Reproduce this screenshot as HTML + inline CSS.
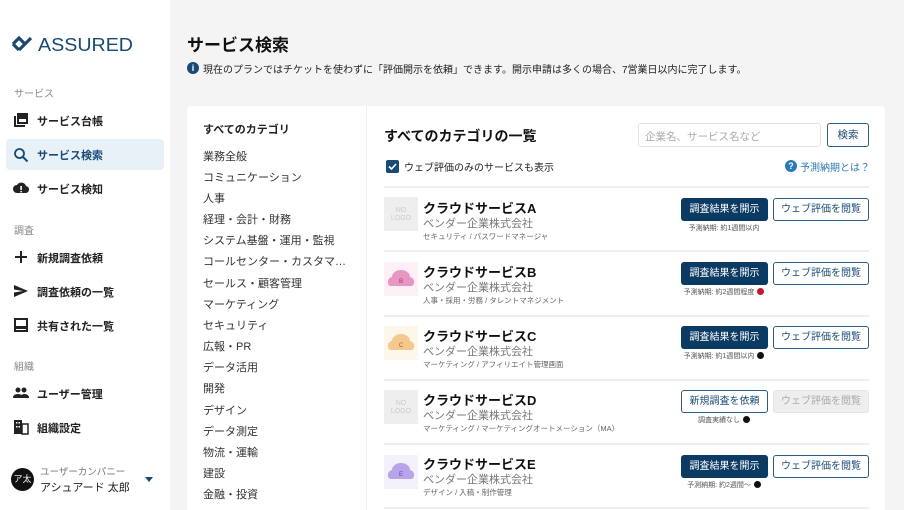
<!DOCTYPE html>
<html><head><meta charset="utf-8"><style>
*{margin:0;padding:0;box-sizing:border-box}
html{width:904px;height:510px;overflow:hidden}
body{width:904px;height:510px;overflow:hidden;background:#f4f4f4;font-family:"Liberation Sans","Noto Sans CJK JP",sans-serif;color:#222;position:relative}
.a{position:absolute;white-space:nowrap}
#side{position:absolute;left:0;top:0;width:170px;height:510px;background:#fff}
.lbl{font-size:10px;color:#888}
.it{font-size:11px;font-weight:bold;color:#222}
.ic{position:absolute;left:13px;width:16px;height:16px}
.card{position:absolute;left:187px;top:106px;width:698px;height:404px;background:#fff;border-radius:4px 4px 0 0}
.cat{font-size:11px;color:#333;left:203px}
.sep{position:absolute;left:384px;width:485px;height:2px;background:#eee}
.logo{position:absolute;left:384px;width:34px;height:34px;background:#eee;font-size:7px;color:#ccc;text-align:center;line-height:8px;padding-top:10px}
.t{font-size:13px;font-weight:bold;color:#111;left:423px}
.v{font-size:11px;color:#777;left:423px}
.g{font-size:7.5px;color:#666;left:423px}
.b1{position:absolute;left:681px;width:87px;height:23px;background:#0b3a63;color:#fff;font-size:10px;text-align:center;line-height:23px;border-radius:3px}
.b2{position:absolute;left:773px;width:96px;height:23px;border:1px solid #2b5b85;color:#1f4c78;font-size:10px;text-align:center;line-height:21px;border-radius:3px;background:#fff}
.n{font-size:7px;color:#555;text-align:center;width:120px;left:664px}
.dot{display:inline-block;width:7px;height:7px;border-radius:50%;background:#111;vertical-align:-1px;margin-left:3px}
</style></head><body>
<div id="side">
<svg class="a" style="left:11px;top:34px" width="124" height="20" viewBox="0 0 124 20">
<path d="M2 10 L8 4 L14 10" stroke="#184a73" stroke-width="3.2" fill="none"/><path d="M8 16 L14 10 L20 4" stroke="#184a73" stroke-width="3.2" fill="none"/><path d="M2 10 L8 16" stroke="#184a73" stroke-width="3.2" fill="none"/>
<text x="27" y="17" font-family="Liberation Sans" font-size="18" fill="#184a73" textLength="95" lengthAdjust="spacingAndGlyphs">ASSURED</text></svg>
<div class="a lbl" style="left:14px;top:85px">サービス</div>
<div class="a" style="left:6px;top:139px;width:158px;height:31px;background:#e8f0f8;border-radius:4px"></div>
<svg class="ic" style="top:112px" viewBox="0 0 16 16"><rect x="4" y="1" width="11" height="11" fill="#222"/><rect x="1" y="4" width="2" height="11" fill="#222"/><rect x="1" y="13" width="11" height="2" fill="#222"/><rect x="6" y="7" width="7" height="3" fill="#fff"/></svg>
<div class="a it" style="left:37px;top:113px">サービス台帳</div>
<svg class="ic" style="top:147px" viewBox="0 0 16 16"><circle cx="6.5" cy="6.5" r="4.5" stroke="#184a73" stroke-width="1.8" fill="none"/><path d="M10 10 L14.5 14.5" stroke="#184a73" stroke-width="2"/></svg>
<div class="a it" style="left:37px;top:147px;color:#184a73">サービス検索</div>
<svg class="ic" style="top:180px" viewBox="0 0 16 16"><path d="M4 13 A4 4 0 0 1 4 5 A5 5 0 0 1 13 6 A3.5 3.5 0 0 1 12 13 Z" fill="#222"/><rect x="7.3" y="6" width="1.6" height="4" fill="#fff"/><rect x="7.3" y="11" width="1.6" height="1.4" fill="#fff"/></svg>
<div class="a it" style="left:37px;top:181px">サービス検知</div>
<div class="a lbl" style="left:14px;top:222px">調査</div>
<svg class="ic" style="top:249px" viewBox="0 0 16 16"><path d="M8 2V14M2 8H14" stroke="#222" stroke-width="2"/></svg>
<div class="a it" style="left:37px;top:250px">新規調査依頼</div>
<svg class="ic" style="top:283px" viewBox="0 0 16 16"><path d="M1 2 L15 8 L1 14 L1 9.5 L10 8 L1 6.5Z" fill="#222"/></svg>
<div class="a it" style="left:37px;top:284px">調査依頼の一覧</div>
<svg class="ic" style="top:317px" viewBox="0 0 16 16"><rect x="2" y="2" width="12" height="12" stroke="#222" stroke-width="2" fill="none"/><rect x="2" y="9" width="12" height="3" fill="#222"/></svg>
<div class="a it" style="left:37px;top:318px">共有された一覧</div>
<div class="a lbl" style="left:14px;top:358px">組織</div>
<svg class="ic" style="top:385px" viewBox="0 0 16 16"><circle cx="5" cy="5" r="2.5" fill="#222"/><circle cx="11" cy="5" r="2.5" fill="#222"/><path d="M0 13 Q0 9 5 9 Q10 9 10 13Z M8 13 Q8 9 11 9 Q16 9 16 13Z" fill="#222"/></svg>
<div class="a it" style="left:37px;top:386px">ユーザー管理</div>
<svg class="ic" style="top:419px" viewBox="0 0 16 16"><rect x="1" y="1" width="8" height="14" fill="#222"/><rect x="9" y="5" width="6" height="10" stroke="#222" stroke-width="1.5" fill="none"/><rect x="3" y="3" width="1.5" height="1.5" fill="#fff"/><rect x="5.5" y="3" width="1.5" height="1.5" fill="#fff"/><rect x="3" y="7" width="1.5" height="1.5" fill="#fff"/><rect x="5.5" y="7" width="1.5" height="1.5" fill="#fff"/></svg>
<div class="a it" style="left:37px;top:420px">組織設定</div>
<div class="a" style="left:11px;top:468px;width:23px;height:23px;border-radius:50%;background:#111;color:#fff;font-size:9px;text-align:center;line-height:23px">ア太</div>
<div class="a" style="left:40px;top:464px;font-size:9.5px;color:#777">ユーザーカンパニー</div>
<div class="a" style="left:40px;top:479px;font-size:11px;color:#222">アシュアード 太郎</div>
<div class="a" style="left:145px;top:477px;width:0;height:0;border-left:4px solid transparent;border-right:4px solid transparent;border-top:5px solid #184a73"></div>
</div>

<div class="a" style="left:187px;top:31px;font-size:17px;font-weight:bold;color:#111">サービス検索</div>
<div class="a" style="left:187px;top:62px;width:12px;height:12px;border-radius:50%;background:#184a73;color:#fff;font-size:9px;font-weight:bold;text-align:center;line-height:12px">i</div>
<div class="a" style="left:203px;top:61px;font-size:10px;color:#222">現在のプランではチケットを使わずに「評価開示を依頼」できます。開示申請は多くの場合、7営業日以内に完了します。</div>

<div class="card"></div>
<div class="a" style="left:366px;top:106px;width:1px;height:404px;background:#eee"></div>
<div class="a" style="left:203px;top:121px;font-size:11px;font-weight:bold">すべてのカテゴリ</div>
<div class="a cat" style="top:148px">業務全般</div>
<div class="a cat" style="top:169px">コミュニケーション</div>
<div class="a cat" style="top:190px">人事</div>
<div class="a cat" style="top:211px">経理・会計・財務</div>
<div class="a cat" style="top:232px">システム基盤・運用・監視</div>
<div class="a cat" style="top:253px;width:148px;overflow:hidden;text-overflow:ellipsis">コールセンター・カスタマーサポート</div>
<div class="a cat" style="top:275px">セールス・顧客管理</div>
<div class="a cat" style="top:296px">マーケティング</div>
<div class="a cat" style="top:317px">セキュリティ</div>
<div class="a cat" style="top:338px">広報・PR</div>
<div class="a cat" style="top:359px">データ活用</div>
<div class="a cat" style="top:380px">開発</div>
<div class="a cat" style="top:402px">デザイン</div>
<div class="a cat" style="top:423px">データ測定</div>
<div class="a cat" style="top:444px">物流・運輸</div>
<div class="a cat" style="top:465px">建設</div>
<div class="a cat" style="top:486px">金融・投資</div>

<div class="a" style="left:384px;top:126px;font-size:14px;font-weight:bold;color:#111">すべてのカテゴリの一覧</div>
<div class="a" style="left:638px;top:123px;width:183px;height:24px;border:1px solid #e2e2e2;border-radius:3px;font-size:10.5px;color:#aaa;padding:5px 6px">企業名、サービス名など</div>
<div class="a" style="left:827px;top:123px;width:42px;height:24px;border:1px solid #2b5b85;border-radius:3px;font-size:10.5px;color:#1f4c78;text-align:center;line-height:22px">検索</div>
<div class="a" style="left:386px;top:160px;width:13px;height:13px;background:#184a73;border-radius:2px"><svg width="13" height="13" viewBox="0 0 13 13" style="display:block"><path d="M3 6.5 L5.5 9 L10 4" stroke="#fff" stroke-width="1.6" fill="none"/></svg></div>
<div class="a" style="left:404px;top:159px;font-size:10px;color:#222">ウェブ評価のみのサービスも表示</div>
<div class="a" style="left:785px;top:160px;width:12px;height:12px;border-radius:50%;background:#2a7ab5;color:#fff;font-size:9px;font-weight:bold;text-align:center;line-height:12px">?</div>
<div class="a" style="left:800px;top:159px;font-size:10px;color:#2a7ab5">予測納期とは？</div>

<div class="sep" style="top:186px"></div>
<div class="sep" style="top:250px"></div>
<div class="sep" style="top:315px"></div>
<div class="sep" style="top:379px"></div>
<div class="sep" style="top:443px"></div>
<div class="sep" style="top:507px"></div>

<!-- A -->
<div class="logo" style="top:197px">NO<br>LOGO</div>
<div class="a t" style="top:198px">クラウドサービスA</div>
<div class="a v" style="top:215px">ベンダー企業株式会社</div>
<div class="a g" style="top:231px">セキュリティ / パスワードマネージャ</div>
<div class="b1" style="top:198px">調査結果を開示</div><div class="b2" style="top:198px">ウェブ評価を閲覧</div>
<div class="a n" style="top:223px">予測納期: 約1週間以内</div>
<!-- B -->
<div class="logo" style="top:262px;background:#fdf0f6;padding-top:0"><svg width="34" height="34" viewBox="0 0 34 34"><path d="M6 24 A5 5 0 0 1 8 15 A9 7 0 0 1 26 15 A5 5 0 0 1 28 24Z" fill="#e897c4"/><text x="17" y="21" font-size="6" fill="#a03070" text-anchor="middle">B</text></svg></div>
<div class="a t" style="top:262px">クラウドサービスB</div>
<div class="a v" style="top:279px">ベンダー企業株式会社</div>
<div class="a g" style="top:295px">人事・採用・労務 / タレントマネジメント</div>
<div class="b1" style="top:262px">調査結果を開示</div><div class="b2" style="top:262px">ウェブ評価を閲覧</div>
<div class="a n" style="top:287px">予測納期: 約2週間程度<span class="dot" style="background:#c0182e"></span></div>
<!-- C -->
<div class="logo" style="top:326px;background:#fdf6ea;padding-top:0"><svg width="34" height="34" viewBox="0 0 34 34"><path d="M6 24 A5 5 0 0 1 8 15 A9 7 0 0 1 26 15 A5 5 0 0 1 28 24Z" fill="#f3c98e"/><text x="17" y="21" font-size="6" fill="#a06020" text-anchor="middle">C</text></svg></div>
<div class="a t" style="top:326px">クラウドサービスC</div>
<div class="a v" style="top:343px">ベンダー企業株式会社</div>
<div class="a g" style="top:359px">マーケティング / アフィリエイト管理画面</div>
<div class="b1" style="top:326px">調査結果を開示</div><div class="b2" style="top:326px">ウェブ評価を閲覧</div>
<div class="a n" style="top:351px">予測納期: 約1週間以内<span class="dot"></span></div>
<!-- D -->
<div class="logo" style="top:390px">NO<br>LOGO</div>
<div class="a t" style="top:390px">クラウドサービスD</div>
<div class="a v" style="top:407px">ベンダー企業株式会社</div>
<div class="a g" style="top:423px">マーケティング / マーケティングオートメーション（MA）</div>
<div class="b2" style="top:390px;left:681px;width:87px">新規調査を依頼</div><div class="b2" style="top:390px;background:#eee;border-color:#e6e6e6;color:#aaa">ウェブ評価を閲覧</div>
<div class="a n" style="top:415px">調査実績なし<span class="dot"></span></div>
<!-- E -->
<div class="logo" style="top:455px;background:#f4f1fc;padding-top:0"><svg width="34" height="34" viewBox="0 0 34 34"><path d="M6 24 A5 5 0 0 1 8 15 A9 7 0 0 1 26 15 A5 5 0 0 1 28 24Z" fill="#b7a4ea"/><text x="17" y="21" font-size="6" fill="#6040b0" text-anchor="middle">E</text></svg></div>
<div class="a t" style="top:454px">クラウドサービスE</div>
<div class="a v" style="top:471px">ベンダー企業株式会社</div>
<div class="a g" style="top:487px">デザイン / 入稿・制作管理</div>
<div class="b1" style="top:455px">調査結果を開示</div><div class="b2" style="top:455px">ウェブ評価を閲覧</div>
<div class="a n" style="top:480px">予測納期: 約2週間〜<span class="dot"></span></div>
</body></html>
